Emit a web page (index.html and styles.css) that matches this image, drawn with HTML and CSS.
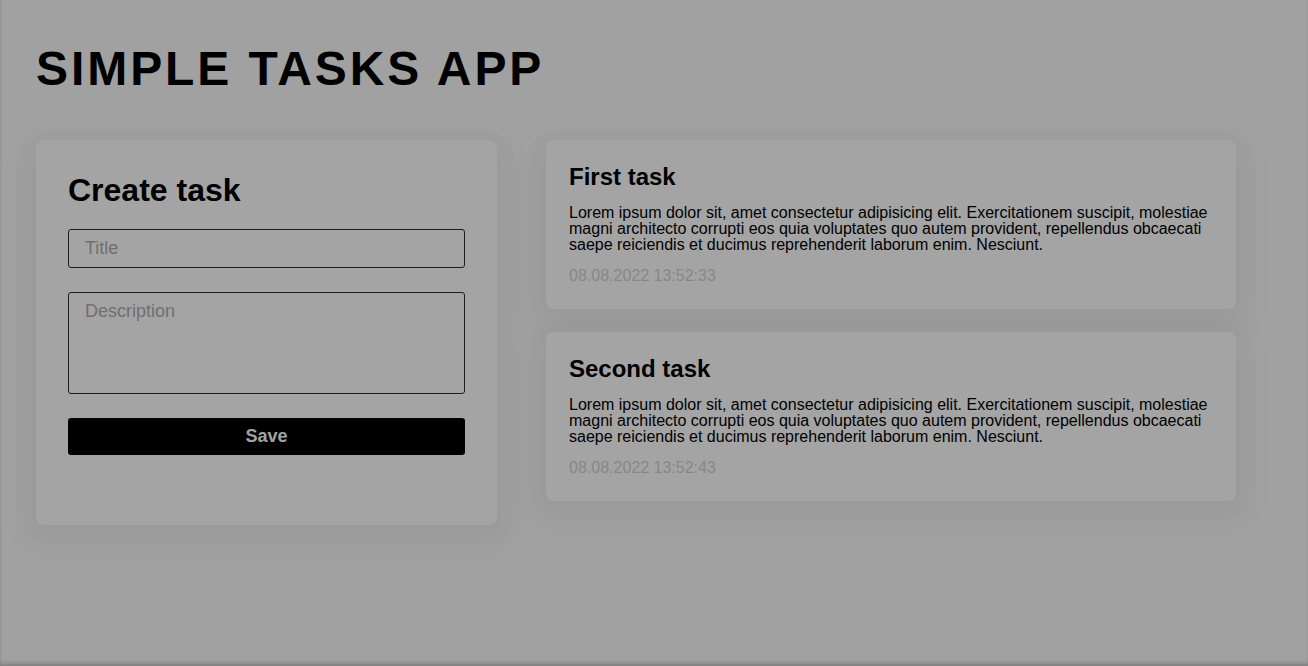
FILE: index.html
```html
<!DOCTYPE html>
<html lang="en">
<head>
<meta charset="utf-8">
<title>Simple Tasks App</title>
<link rel="stylesheet" href="styles.css">
</head>
<body>
<div class="page">
  <h1 class="app-title">SIMPLE TASKS APP</h1>
  <main class="layout">
    <section class="card create-card">
      <h2 class="create-title">Create task</h2>
      <form class="task-form">
        <input class="field field-input" type="text" placeholder="Title">
        <textarea class="field field-area" placeholder="Description"></textarea>
        <button class="save-btn" type="button">Save</button>
      </form>
    </section>
    <section class="task-list">
      <article class="card task-card">
        <h3 class="task-title">First task</h3>
        <p class="task-desc">Lorem ipsum dolor sit, amet consectetur adipisicing elit. Exercitationem suscipit, molestiae magni architecto corrupti eos quia voluptates quo autem provident, repellendus obcaecati saepe reiciendis et ducimus reprehenderit laborum enim. Nesciunt.</p>
        <div class="task-date">08.08.2022 13:52:33</div>
      </article>
      <article class="card task-card">
        <h3 class="task-title">Second task</h3>
        <p class="task-desc">Lorem ipsum dolor sit, amet consectetur adipisicing elit. Exercitationem suscipit, molestiae magni architecto corrupti eos quia voluptates quo autem provident, repellendus obcaecati saepe reiciendis et ducimus reprehenderit laborum enim. Nesciunt.</p>
        <div class="task-date">08.08.2022 13:52:43</div>
      </article>
    </section>
  </main>
</div>
</body>
</html>
```
FILE: styles.css
```css
* { box-sizing: border-box; }

html, body {
  margin: 0;
  height: 100%;
}

body {
  background: #a1a1a1;
  font-family: "Liberation Sans", Arial, sans-serif;
  color: #000;
  box-shadow: inset 0 -4px 5px -2px rgba(0,0,0,0.25), inset 2px 0 3px -2px rgba(0,0,0,0.06);
  overflow: hidden;
}

.page {
  padding: 41px 36px 0 36px;
}

.app-title {
  margin: 0 0 44px 0;
  font-size: 48px;
  line-height: 55px;
  font-weight: 700;
  letter-spacing: 2.93px;
}

.layout {
  display: flex;
  align-items: flex-start;
  gap: 49px;
}

.card {
  background: #a4a4a4;
  border-radius: 8px;
  box-shadow: 0 6px 20px 8px rgba(0,0,0,0.025), 0 12px 30px 18px rgba(0,0,0,0.018);
}

.create-card {
  width: 461px;
  padding: 32px 32px 70px 32px;
}

.create-title {
  margin: 0 0 20px 0;
  font-size: 32px;
  line-height: 37px;
  font-weight: 700;
}

.task-form {
  display: flex;
  flex-direction: column;
  gap: 24px;
}

.field {
  display: block;
  width: 100%;
  background: transparent;
  border: 1px solid #1c1c1c;
  border-radius: 3px;
  font-family: "Liberation Sans", Arial, sans-serif;
  font-size: 18px;
  line-height: 21px;
  color: #000;
  padding: 8px 16px;
  margin: 0;
  outline: none;
}

.field::placeholder {
  color: #6f6f6f;
  opacity: 1;
}

.field-input { height: 39px; }

.field-area {
  height: 102px;
  resize: none;
}

.save-btn {
  display: block;
  width: 100%;
  height: 37px;
  border: none;
  border-radius: 3px;
  background: #000;
  color: #a3a3a3;
  font-family: "Liberation Sans", Arial, sans-serif;
  font-size: 18px;
  font-weight: 700;
  padding: 0;
  margin: 0;
}

.task-list {
  width: 690px;
  display: flex;
  flex-direction: column;
  gap: 23px;
}

.task-card {
  padding: 23px 23px 25px 23px;
}

.task-title {
  margin: 0 0 14px 0;
  font-size: 24px;
  line-height: 28px;
  font-weight: 700;
}

.task-desc {
  margin: 0 0 15px 0;
  font-size: 16px;
  line-height: 16px;
}

.task-date {
  font-size: 16px;
  line-height: 16px;
  color: #878787;
}
```
